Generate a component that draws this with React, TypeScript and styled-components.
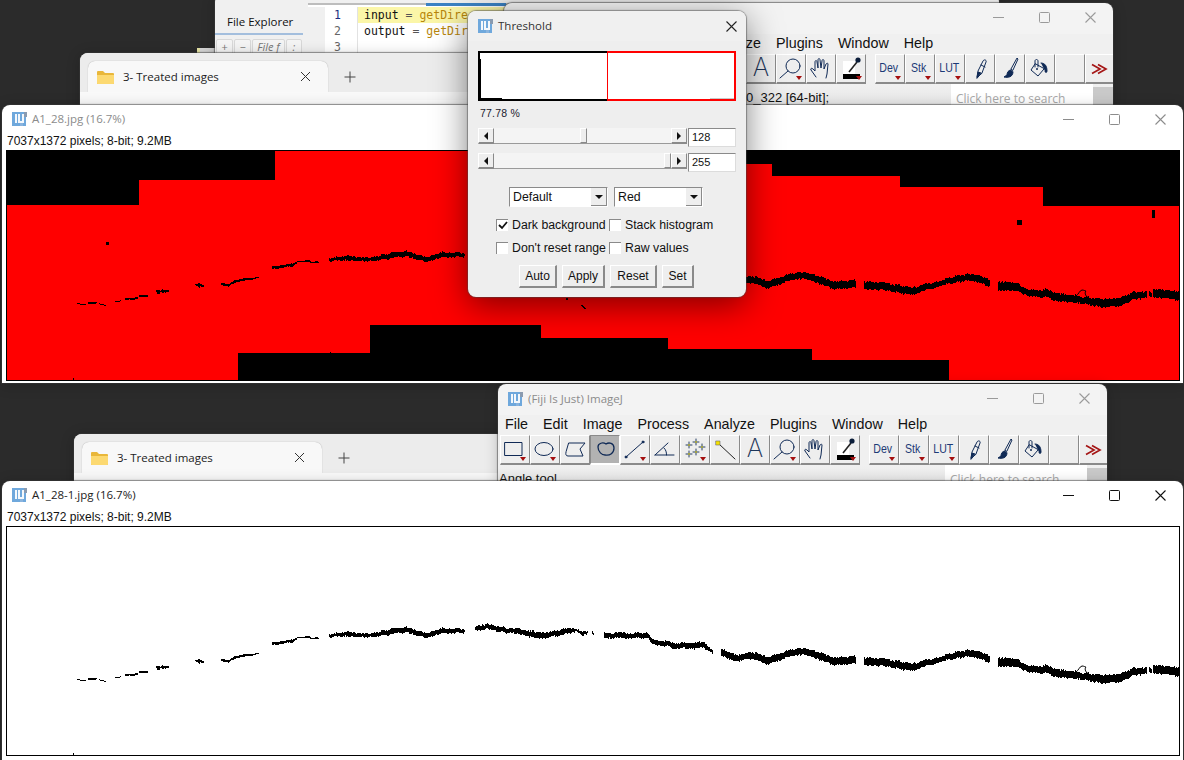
import React from "react";
import styled, { createGlobalStyle, css } from "styled-components";

const Global = createGlobalStyle`
  html, body { margin: 0; padding: 0; background: #2b2b2b; }
  #root { width: 1184px; height: 760px; }
  * { box-sizing: border-box; }
`;

const UI = `"Open Sans", "Noto Sans", "Liberation Sans", sans-serif`;
const AWT = `"Liberation Sans", Arial, sans-serif`;
const NAVY = "#102a56";

const Desktop = styled.div`
  position: relative;
  width: 1184px;
  height: 760px;
  overflow: hidden;
  background: #2b2b2b;
`;

const Win = styled.div<{ $x: number; $y: number; $w: number; $h: number; $bg?: string }>`
  position: absolute;
  left: ${(p) => p.$x}px;
  top: ${(p) => p.$y}px;
  width: ${(p) => p.$w}px;
  height: ${(p) => p.$h}px;
  background: ${(p) => p.$bg || "#f3f3f3"};
  border-radius: 8px 8px 0 0;
  box-shadow: 0 0 1px 1px rgba(60, 60, 60, 0.55), 0 2px 14px rgba(0, 0, 0, 0.22);
  overflow: hidden;
  display: flex;
  flex-direction: column;
`;

/* ---------- editor ---------- */
const EditorBody = styled.div`
  flex: 1;
  display: flex;
  padding-top: 9px;
`;
const Side = styled.div`
  width: 88px;
  display: flex;
  flex-direction: column;
`;
const SideTab = styled.div`
  height: 32px;
  padding: 7px 0 0 12px;
  border-bottom: 2px solid #a3bedd;
  font: 11.5px/24px ${UI};
  color: #111;
`;
const SideTools = styled.div`
  display: flex;
  gap: 1px;
  padding: 4px 0 0 1px;
`;
const SideBtn = styled.div<{ $w: number }>`
  width: ${(p) => p.$w}px;
  height: 16px;
  background: #f4f4f4;
  border: 1px solid #d8d8d8;
  border-radius: 2px;
  font: italic 11px/14px ${UI};
  color: #777;
  text-align: center;
`;
const Code = styled.div`
  margin-left: 5px;
  flex: 1;
  border-top: 2px solid #bdbdbd;
  background: #fff;
  display: flex;
  flex-direction: column;
  position: relative;
`;
const CodeTabMark = styled.div`
  position: absolute;
  left: 118px;
  top: -2px;
  width: 80px;
  height: 3px;
  background: #3b82c4;
`;
const CodeLine = styled.div`
  display: flex;
  height: 16px;
  font: 11.5px/16px "DejaVu Sans Mono", monospace;
  &:nth-child(2) { margin-top: 2px; }
  background: linear-gradient(90deg, #f0f0f0 0 17px, #fff 17px);
`;
const LineNo = styled.span<{ $on?: boolean }>`
  width: 50px;
  padding-right: 16px;
  text-align: right;
  color: ${(p) => (p.$on ? "#1c2e80" : "#666")};
  border-right: 1px solid #e2e2e2;
`;
const LineCode = styled.span<{ $hl?: boolean }>`
  flex: 1;
  padding-left: 6px;
  white-space: pre;
  color: #111;
  background: ${(p) => (p.$hl ? "#fbf6a8" : "transparent")};
`;
const Fn = styled.span`
  color: #b8860b;
`;
const Op = styled.span`
  color: #555;
`;
const Scrap = styled.div`
  position: absolute;
  left: 197px;
  top: 48px;
  width: 18px;
  height: 8px;
  background: linear-gradient(90deg, #e8e6a8 0 3px, #d9d9d9 3px);
`;

/* ---------- explorer ---------- */
const TabStrip = styled.div`
  display: flex;
  align-items: flex-end;
  height: 39px;
  padding-left: 8px;
  background: #ececec;
`;
const Tab = styled.div`
  width: 240px;
  height: 31px;
  background: #f8f8f8;
  border-radius: 7px 7px 0 0;
  display: flex;
  align-items: center;
  padding-left: 9px;
  box-shadow: 0 0 1px rgba(0, 0, 0, 0.35);
`;
const TabTitle = styled.span`
  flex: 1;
  margin-left: 9px;
  font: 500 11.5px/16px ${UI};
  color: #222;
  white-space: nowrap;
`;
const TabClose = styled.svg`
  width: 11px;
  height: 11px;
  margin-right: 17px;
`;
const TabPlus = styled.svg`
  width: 12px;
  height: 12px;
  margin: 0 0 9px 16px;
`;
const ExplorerBar = styled.div`
  flex: 1;
  background: #f9f9f9;
  display: flex;
  justify-content: flex-end;
  padding-top: 8px;
`;
const ExplorerCrumb = styled.div`
  width: 300px;
  background: #fdfdfd;
  border-radius: 4px 0 0 0;
`;

/* ---------- imagej ---------- */
const TitleBar = styled.div<{ $h?: number }>`
  height: ${(p) => p.$h ?? 30}px;
  flex: none;
  display: flex;
  align-items: center;
  padding: 0 0 2px 10px;
`;
const TitleText = styled.span<{ $active?: boolean }>`
  margin-left: 5px;
  font: 11.5px/16px ${UI};
  color: ${(p) => (p.$active ? "#222" : "#8b8b8b")};
  white-space: nowrap;
`;
const Controls = styled.div`
  margin-left: auto;
  display: flex;
  gap: 35px;
  padding-right: 17px;
`;
const Ctl = styled.svg`
  width: 11px;
  height: 11px;
  display: block;
`;
const MenuBar = styled.div`
  height: 20px;
  flex: none;
  display: flex;
  gap: 15px;
  padding-left: 7px;
  background: #f0f0f0;
  font: 14.3px/18px ${AWT};
  color: #111;
`;
const ToolBar = styled.div`
  height: 30px;
  flex: none;
  display: flex;
  padding-left: 2px;
  background: #f0f0f0;
`;
const Tool = styled.div<{ $active?: boolean; $gap?: boolean }>`
  position: relative;
  width: 30px;
  height: 30px;
  flex: none;
  display: flex;
  align-items: center;
  justify-content: center;
  background: ${(p) => (p.$active ? "#b2b2b2" : "#eeeeee")};
  border-top: 1px solid #fff;
  border-left: 1px solid #fff;
  border-right: 1px solid #8a8a8a;
  border-bottom: 2px solid #8a8a8a;
  ${(p) => p.$active && css`border-color: #8a8a8a #fff #fff #8a8a8a;`}
  ${(p) => p.$gap && css`margin-left: 9px;`}
  font-family: ${AWT};
  color: ${NAVY};
  svg { display: block; }
`;
const Drop = styled.span`
  position: absolute;
  right: 3px;
  bottom: 2px;
  width: 0;
  height: 0;
  border-left: 3.5px solid transparent;
  border-right: 3.5px solid transparent;
  border-top: 4px solid #a40f0f;
`;
const ToolLabel = styled.span<{ $size: number }>`
  font-size: ${(p) => p.$size}px;
  line-height: 1;
  transform: translate(-1px, -1px) scaleX(0.88);
  color: #1c3a76;
`;
const BigA = styled.span`
  font: 200 25px/1 Inter, ${AWT};
  color: #1d3558;
  transform: translateY(-1px);
`;
const StatusRow = styled.div`
  flex: 1;
  display: flex;
  background: linear-gradient(180deg, #f0f0f0 0%, #e6e6e6 100%);
`;
const StatusText = styled.div<{ $pad: number }>`
  width: 447px;
  flex: none;
  padding: 6px 0 0 ${(p) => p.$pad}px;
  font: 13px/16px ${AWT};
  color: #111;
  white-space: nowrap;
`;
const Search = styled.div`
  width: 142px;
  flex: none;
  background: #fff;
  padding: 7px 0 0 5px;
  font: 12px/16px ${UI};
  color: #a8a8a8;
  white-space: nowrap;
`;
const ScrollStub = styled.div`
  flex: 1;
  margin-top: 3px;
  background: #c9c9c9;
`;

/* ---------- image windows ---------- */
const Caption = styled.div`
  height: 15px;
  flex: none;
  padding-left: 5px;
  background: #fff;
  font: 12px/13px ${AWT};
  color: #111;
`;
const ImageHold = styled.div`
  flex: 1;
  background: #fff;
  padding: 0 3px 0 4px;
`;
const Frame = styled.div<{ $h: number }>`
  width: 1174px;
  height: ${(p) => p.$h}px;
  border: 1px solid #000;
  background: #fff;
  overflow: hidden;
  svg { display: block; }
`;

/* ---------- threshold dialog ---------- */
const Dialog = styled.div`
  position: absolute;
  left: 468px;
  top: 11px;
  width: 278px;
  height: 286px;
  background: #eeeeee;
  border-radius: 8px;
  box-shadow: 0 0 1px 1px rgba(70, 70, 70, 0.5), 0 8px 34px rgba(0, 0, 0, 0.5);
  display: flex;
  flex-direction: column;
  overflow: hidden;
  font-family: ${AWT};
`;
const DialogTitle = styled.div`
  height: 30px;
  flex: none;
  display: flex;
  align-items: center;
  padding: 0 9px 0 10px;
  background: #f0f0f0;
`;
const DialogTitleText = styled.span`
  margin-left: 5px;
  flex: 1;
  font: 11.5px/16px ${UI};
  color: #333;
`;
const DialogBody = styled.div`
  flex: 1;
  display: flex;
  flex-direction: column;
  padding: 10px 10px 0;
`;
const Plot = styled.div`
  width: 258px;
  height: 50px;
  flex: none;
  display: flex;
  background: #fff;
  position: relative;
`;
const PlotLow = styled.div`
  width: 129px;
  border: 2px solid #000;
  border-right: none;
  position: relative;
`;
const PlotHigh = styled.div`
  flex: 1;
  border: 2px solid #f00;
  border-left-width: 1px;
  position: relative;
`;
const PlotSpike = styled.span`
  position: absolute;
  left: 0;
  top: 6px;
  bottom: 0;
  width: 1px;
  background: #000;
`;
const PlotFoot = styled.span`
  position: absolute;
  left: 0;
  bottom: 0;
  width: 22px;
  height: 1px;
  background: #000;
`;
const PlotTail = styled.span`
  position: absolute;
  right: 0;
  bottom: 0;
  width: 24px;
  height: 1px;
  background: #c8c8c8;
`;
const Percent = styled.div`
  height: 27px;
  flex: none;
  padding: 5px 0 0 2px;
  font: 10.5px/14px ${AWT};
  color: #1a1a2e;
  letter-spacing: 0.2px;
`;
const SliderRow = styled.div`
  height: 19px;
  flex: none;
  display: flex;
  margin-bottom: 6px;
`;
const ArrowBtn = styled.div`
  width: 16px;
  height: 16px;
  flex: none;
  display: flex;
  align-items: center;
  justify-content: center;
  background: #eeeeee;
  border-top: 1px solid #fff;
  border-left: 1px solid #fff;
  border-right: 1px solid #8a8a8a;
  border-bottom: 2px solid #8a8a8a;
`;
const Track = styled.div`
  flex: none;
  width: 177px;
  height: 16px;
  background: #f4f4f4;
  border-bottom: 1px solid #9a9a9a;
  position: relative;
`;
const Thumb = styled.span<{ $at: number }>`
  position: absolute;
  left: ${(p) => p.$at}px;
  top: 0;
  width: 7px;
  height: 15px;
  background: #eeeeee;
  border-top: 1px solid #fff;
  border-left: 1px solid #fff;
  border-right: 1px solid #8a8a8a;
  border-bottom: 1px solid #8a8a8a;
`;
const Field = styled.div`
  width: 48px;
  height: 19px;
  margin-left: 1px;
  flex: none;
  background: #fff;
  border-top: 1px solid #8a8a8a;
  border-left: 1px solid #8a8a8a;
  border-right: 1px solid #dcdcdc;
  border-bottom: 1px solid #dcdcdc;
  padding-left: 3px;
  font: 11px/17px ${AWT};
  color: #111;
`;
const SelectRow = styled.div`
  display: flex;
  gap: 6px;
  padding: 9px 0 0 31px;
  flex: none;
`;
const Select = styled.div<{ $w: number }>`
  width: ${(p) => p.$w}px;
  height: 20px;
  display: flex;
  background: #fff;
  border-top: 1px solid #8a8a8a;
  border-left: 1px solid #8a8a8a;
  border-right: 1px solid #fff;
  border-bottom: 1px solid #fff;
`;
const SelectText = styled.span`
  flex: 1;
  padding-left: 3px;
  font: 12.3px/18px ${AWT};
  color: #111;
`;
const SelectBtn = styled.span`
  width: 16px;
  display: flex;
  align-items: center;
  justify-content: center;
  background: #eeeeee;
  border-right: 1px solid #8a8a8a;
  border-bottom: 1px solid #8a8a8a;
`;
const Checks = styled.div`
  display: grid;
  grid-template-columns: 113px auto;
  grid-auto-rows: 22.5px;
  padding: 7px 0 0 18px;
  flex: none;
`;
const Check = styled.label`
  display: flex;
  align-items: center;
  gap: 4px;
  font: 12.3px/16px ${AWT};
  color: #111;
  white-space: nowrap;
`;
const Box = styled.span`
  width: 12px;
  height: 12px;
  flex: none;
  background: #fff;
  border-top: 1px solid #8a8a8a;
  border-left: 1px solid #8a8a8a;
  display: flex;
  align-items: center;
  justify-content: center;
`;
const Buttons = styled.div`
  display: flex;
  gap: 5px;
  padding: 6px 0 0 41px;
  flex: none;
`;
const Btn = styled.div<{ $w: number }>`
  width: ${(p) => p.$w}px;
  height: 23px;
  text-align: center;
  background: #eeeeee;
  border-top: 1px solid #fff;
  border-left: 1px solid #fff;
  border-right: 2px solid #8a8a8a;
  border-bottom: 2px solid #8a8a8a;
  font: 12px/20px ${AWT};
  color: #111;
`;

/* ---------- drawings ---------- */
const FijiIcon = () => (
  <svg width="15" height="14" viewBox="0 0 15 14">
    <rect x="0" y="0" width="14" height="14" fill="#6fa8dc" />
    <rect x="3" y="2" width="2" height="9" fill="#f4f8fc" />
    <path d="M6 2h2v7h2V2h3v2h-1v7H6z" fill="#f4f8fc" />
    <rect x="12" y="0" width="3" height="5" fill="#8a9bb0" />
    <rect x="8" y="11" width="3" height="3" fill="#8ab4de" />
  </svg>
);

const Folder = () => (
  <svg width="17" height="14" viewBox="0 0 17 14">
    <path d="M0 2a1 1 0 0 1 1-1h5l2 2h8a1 1 0 0 1 1 1v9a1 1 0 0 1-1 1H1a1 1 0 0 1-1-1z" fill="#e9b73a" />
    <path d="M0 5h17v8a1 1 0 0 1-1 1H1a1 1 0 0 1-1-1z" fill="#fcd971" />
  </svg>
);

const XIcon = ({ c }: { c: string }) => (
  <Ctl viewBox="0 0 11 11"><path d="M.5.5l10 10M10.5.5l-10 10" stroke={c} fill="none" strokeWidth="1.1" /></Ctl>
);

const WinControls = ({ c }: { c: string }) => (
  <Controls>
    <Ctl viewBox="0 0 11 11"><path d="M0 5.500h11" stroke={c} strokeWidth="1.1" /></Ctl>
    <Ctl viewBox="0 0 11 11"><rect x=".5" y=".5" width="10" height="10" rx="1" fill="none" stroke={c} /></Ctl>
    <XIcon c={c} />
  </Controls>
);

const Ico = ({ children }: { children: React.ReactNode }) => (
  <svg width="28" height="27" viewBox="0 0 28 27" fill="none" stroke={NAVY} strokeWidth="1" strokeLinecap="round" strokeLinejoin="round">
    {children}
  </svg>
);

const Spark = ({ x, y }: { x: number; y: number }) => (
  <g>
    <path d={`M${x - 3} ${y}h6M${x} ${y - 3}v6`} stroke={NAVY} strokeWidth="0.9" />
    <rect x={x - 0.7} y={y - 0.7} width="1.4" height="1.4" fill="#f4e000" stroke="none" />
  </g>
);

const ToolRow = () => (
  <ToolBar>
    <Tool><Ico><rect x="4" y="6.5" width="17" height="13" /></Ico><Drop /></Tool>
    <Tool><Ico><ellipse cx="13" cy="13" rx="9" ry="6.5" /></Ico><Drop /></Tool>
    <Tool><Ico><path d="M8 7h16l-5 6 3 7H7Q4 20 5 16z" /></Ico></Tool>
    <Tool $active><Ico><path d="M7 11c0-4 5-5 8-3 3-2 8-1 8 4s-4 8-9 7c-3 0-7-3-7-8z" strokeWidth="1.3" /><path d="M11 15c2 1 4 1 6 0" stroke="#b2b2b2" /></Ico></Tool>
    <Tool><Ico><path d="M5 21L22 6" /><circle cx="5" cy="21" r="1" fill={NAVY} /><circle cx="22" cy="6" r="1" fill={NAVY} /></Ico><Drop /></Tool>
    <Tool><Ico><path d="M4 19L17 7M4 19h19M13 12c2 2 2.500 4 2.500 7" /></Ico></Tool>
    <Tool>
      <Ico>
        <Spark x={8} y={9} /><Spark x={15} y={6} /><Spark x={21} y={11} /><Spark x={8} y={18} /><Spark x={15} y={16} />
      </Ico>
      <Drop />
    </Tool>
    <Tool>
      <Ico>
        <path d="M8 8l16 15" stroke="#222" />
        <rect x="5" y="5" width="4" height="4" fill="#f4e000" stroke="#666" strokeWidth=".6" />
      </Ico>
    </Tool>
    <Tool><BigA>A</BigA></Tool>
    <Tool><Ico><circle cx="16" cy="11" r="7" /><path d="M11 16l-8 7" /></Ico><Drop /></Tool>
    <Tool>
      <Ico>
        <path d="M9 22l-5-7c-1-2 1-2 2-1l2 2 0-9c0-2 2-2 2 0l1 6 0-8c0-2 2-2 2 0l1 8 1-7c0-2 2-2 2 0l0 8 2-5c1-1 2-1 2 0l-1 10-1 4" />
      </Ico>
    </Tool>
    <Tool>
      <svg width="28" height="27" viewBox="0 0 28 27">
        <rect x="6" y="6" width="12" height="13" fill="#fff" />
        <rect x="6" y="19" width="17" height="5" fill="#000" />
        <path d="M12 17l8-10" stroke="#222" strokeWidth="1.6" />
        <circle cx="21" cy="5" r="2.600" fill="#0b1d3a" />
      </svg>
      <Drop />
    </Tool>
    <Tool $gap><ToolLabel $size={12}>Dev</ToolLabel><Drop /></Tool>
    <Tool><ToolLabel $size={12}>Stk</ToolLabel><Drop /></Tool>
    <Tool><ToolLabel $size={12}>LUT</ToolLabel><Drop /></Tool>
    <Tool>
      <Ico>
        <path d="M11 22l1-6 5-10c1-2 4-1 3 1l-4 11z" />
        <path d="M11 23l1-6 3 1z" fill={NAVY} />
        <path d="M15 10l4 2" />
      </Ico>
    </Tool>
    <Tool>
      <Ico>
        <path d="M15 14l6-11 1 1-5 11z" />
        <path d="M15 15c-3 0-4 3-4 5l-3 2c4 1 9 0 9-5z" fill={NAVY} />
      </Ico>
    </Tool>
    <Tool>
      <Ico>
        <path d="M9 9l-4 6 7 6 6-7z" />
        <path d="M9 12V6c0-2 3-2 3 0v6" />
        <path d="M15 8c4 0 6 3 6 8 0 2-2 2-2 0" fill={NAVY} />
        <circle cx="11" cy="14" r="1" fill={NAVY} stroke="none" />
      </Ico>
    </Tool>
    <Tool />
    <Tool>
      <svg width="22" height="12" viewBox="0 0 22 12" fill="none" stroke="#a51616" strokeWidth="1.7">
        <path d="M3 1.500L11 6 3 10.500M9 1.500L17 6l-8 4.500" />
      </svg>
    </Tool>
  </ToolBar>
);

type P = [number, number, number];
const SEGS: P[][] = [
  [[77, 304, 1], [86, 304.3, 1]],
  [[88, 303, 1.6], [97, 303, 1.6]],
  [[99, 304, 1], [106, 305, 1]],
  [[115, 302, 1], [121, 300.5, 1]],
  [[125, 299, 2], [138, 298.5, 2]],
  [[139, 297, 2], [148, 295.5, 2]],
  [[156, 291, 2.5], [163, 292, 3], [169, 290.5, 1.5]],
  [[195, 284, 1.5], [199, 285, 4], [204, 286.5, 1.5]],
  [[221, 283.5, 2.5], [228, 285, 2.5], [236, 281, 2.5], [248, 279.5, 2], [259, 278, 1]],
  [[272, 267.5, 2.5], [286, 266, 2.5], [292, 265, 3], [297, 263, 1]],
  [[297, 262, 1], [308, 261.5, 1.4], [319, 263, 1.5]],
  [[329, 259.5, 3], [347, 258, 4.5], [367, 260, 3.5], [387, 256.5, 5], [405, 253.5, 5], [425, 260, 5], [443, 254.5, 5], [465, 255, 3.5]],
  [[475, 252, 4.5], [486, 250.5, 5], [498, 253, 5], [513, 255, 5], [541, 259.5, 6], [570, 255, 5], [576, 254, 2], [582, 258, 4], [588, 255, 2]],
  [[592, 257, 3], [594, 259, 2]],
  [[604, 259, 5], [628, 260, 5], [647, 259, 5], [651, 265, 5], [677, 270, 5.5], [704, 269, 6], [713, 276, 2.5]],
  [[721, 277, 7], [738, 282, 6.5], [751, 279, 6.5], [766, 285, 7.5], [787, 278, 6.5], [803, 275, 6.5], [833, 285, 7.5], [856, 284, 7.5]],
  [[864, 285, 7.5], [887, 287, 7.5], [912, 291, 7.5], [927, 287, 6], [940, 283, 5], [957, 279, 6.5], [973, 277, 6.5], [990, 283, 7]],
  [[998, 286, 8.5], [1017, 287, 7.5], [1028, 293, 6.5], [1047, 293, 7.5], [1053, 297, 8.5], [1070, 298, 7], [1080, 300, 7], [1103, 303, 8.5], [1120, 302, 8.5], [1133, 296, 7], [1147, 294, 6]],
  [[1149, 294, 5], [1152, 295, 4]],
  [[1153, 293, 8.5], [1166, 294, 8.5], [1179, 296, 9]],
];

const noise = (n: number) => {
  const s = Math.sin(n * 12.9898) * 43758.5453;
  return s - Math.floor(s);
};

const crackPath = () => {
  let d = "";
  SEGS.forEach((pts) => {
    for (let i = 0; i < pts.length - 1; i++) {
      const [x0, y0, t0] = pts[i];
      const [x1, y1, t1] = pts[i + 1];
      for (let x = x0; x < x1; x++) {
        const f = (x - x0) / (x1 - x0);
        const y = y0 + (y1 - y0) * f + (noise(Math.floor(x / 5)) - 0.5) * 1.4;
        const t = t0 + (t1 - t0) * f;
        const rough = t > 2.5 ? 1.6 : 0.3;
        const top = Math.round(y - t / 2 + (noise(x) - 0.5) * rough);
        const bot = Math.max(top + 1, Math.round(y + t / 2 + (noise(x + 97) - 0.5) * rough));
        d += `M${x} ${top}h1V${bot}h-1z`;
      }
    }
  });
  return d;
};
const CRACK = crackPath();

const Crack = () => (
  <g>
    <path d={CRACK} fill="#000" shapeRendering="crispEdges" />
    <path d="M1076 296c3-2 3-5 6-6 2 0 3 1 4 1M1086 291c-2 2 0 6 3 7" fill="none" stroke="#000" strokeWidth="1" />
  </g>
);

const BLACK_AREAS = [
  "M6 150H275V180H139V205H6Z",
  "M746 150H1180V206H1043V187H900V176H772V164H746Z",
  "M238 381V353H370V325H541V338H668V349H812V360H949V381Z",
];

const ThresholdImage = () => (
  <svg width="1172" height="229" viewBox="7 151 1172 229">
    <rect x="6" y="150" width="1174" height="231" fill="#f00" />
    {BLACK_AREAS.map((d) => <path key={d} d={d} fill="#000" shapeRendering="crispEdges" />)}
    <Crack />
    <g fill="#000" shapeRendering="crispEdges">
      <rect x="106" y="242" width="3" height="3" />
      <rect x="1017" y="220" width="5" height="5" />
      <rect x="1152" y="210" width="3" height="8" />
      <rect x="566" y="298" width="2" height="2" />
      <path d="M581 305h2l3 4h-2z" />
      <rect x="73" y="378" width="1" height="2" />
      <rect x="330" y="352" width="1" height="2" />
    </g>
  </svg>
);

const MaskImage = () => (
  <svg width="1172" height="228" viewBox="7 151 1172 228">
    <rect x="6" y="150" width="1174" height="231" fill="#fff" />
    <Crack />
    <rect x="73" y="377" width="1" height="2" fill="#000" />
  </svg>
);

const ImageJWindow = ({ x, y, title, status, pad }: { x: number; y: number; title?: string; status: string; pad: number }) => (
  <Win $x={x} $y={y} $w={609} $h={102}>
    <TitleBar $h={31}>
      <FijiIcon />
      {title && <TitleText>{title}</TitleText>}
      <WinControls c="#9a9a9a" />
    </TitleBar>
    <MenuBar>
      {["File", "Edit", "Image", "Process", "Analyze", "Plugins", "Window", "Help"].map((m) => (
        <span key={m}>{m}</span>
      ))}
    </MenuBar>
    <ToolRow />
    <StatusRow>
      <StatusText $pad={pad}>{status}</StatusText>
      <Search>Click here to search</Search>
      <ScrollStub />
    </StatusRow>
  </Win>
);

const ExplorerWindow = ({ x, y, h }: { x: number; y: number; h: number }) => (
  <Win $x={x} $y={y} $w={430} $h={h} $bg="#ececec">
    <TabStrip>
      <Tab>
        <Folder />
        <TabTitle>3- Treated images</TabTitle>
        <TabClose viewBox="0 0 11 11"><path d="M1 1l9 9M10 1l-9 9" stroke="#333" fill="none" /></TabClose>
      </Tab>
      <TabPlus viewBox="0 0 12 12"><path d="M6 .5v11M.5 6h11" stroke="#444" fill="none" /></TabPlus>
    </TabStrip>
    <ExplorerBar><ExplorerCrumb /></ExplorerBar>
  </Win>
);

export default function App() {
  return (
    <Desktop>
      <Global />
      <Scrap />
      <Win $x={215} $y={-6} $w={784} $h={70} $bg="#f0f0f0">
        <EditorBody>
          <Side>
            <SideTab>File Explorer</SideTab>
            <SideTools>
              <SideBtn $w={17}>+</SideBtn>
              <SideBtn $w={17}>−</SideBtn>
              <SideBtn $w={33}>File f</SideBtn>
              <SideBtn $w={16}>:</SideBtn>
            </SideTools>
          </Side>
          <Code>
            <CodeTabMark />
            <CodeLine>
              <LineNo $on>1</LineNo>
              <LineCode $hl>input <Op>=</Op> <Fn>getDire</Fn></LineCode>
            </CodeLine>
            <CodeLine>
              <LineNo>2</LineNo>
              <LineCode>output <Op>=</Op> <Fn>getDir</Fn></LineCode>
            </CodeLine>
            <CodeLine>
              <LineNo>3</LineNo>
              <LineCode />
            </CodeLine>
          </Code>
        </EditorBody>
      </Win>

      <ExplorerWindow x={80} y={53} h={55} />
      <ImageJWindow x={504} y={3} status="0_322 [64-bit];" pad={242} />

      <Win $x={2} $y={105} $w={1181} $h={278} $bg="#fff">
        <TitleBar>
          <FijiIcon />
          <TitleText>A1_28.jpg (16.7%)</TitleText>
          <WinControls c="#8c8c8c" />
        </TitleBar>
        <Caption>7037x1372 pixels; 8-bit; 9.2MB</Caption>
        <ImageHold>
          <Frame $h={231}><ThresholdImage /></Frame>
        </ImageHold>
      </Win>

      <ExplorerWindow x={74} y={434} h={50} />
      <ImageJWindow x={498} y={384} title="(Fiji Is Just) ImageJ" status="Angle tool" pad={1} />

      <Win $x={2} $y={481} $w={1181} $h={285} $bg="#fff">
        <TitleBar>
          <FijiIcon />
          <TitleText $active>A1_28-1.jpg (16.7%)</TitleText>
          <WinControls c="#111" />
        </TitleBar>
        <Caption>7037x1372 pixels; 8-bit; 9.2MB</Caption>
        <ImageHold>
          <Frame $h={230}><MaskImage /></Frame>
        </ImageHold>
      </Win>

      <Dialog>
        <DialogTitle>
          <FijiIcon />
          <DialogTitleText>Threshold</DialogTitleText>
          <XIcon c="#222" />
        </DialogTitle>
        <DialogBody>
          <Plot>
            <PlotLow><PlotSpike /><PlotFoot /></PlotLow>
            <PlotHigh><PlotTail /></PlotHigh>
          </Plot>
          <Percent>77.78 %</Percent>
          <SliderRow>
            <ArrowBtn><svg width="6" height="8"><path d="M5 0v8L1 4z" fill="#111" /></svg></ArrowBtn>
            <Track><Thumb $at={86} /></Track>
            <ArrowBtn><svg width="6" height="8"><path d="M1 0v8l4-4z" fill="#111" /></svg></ArrowBtn>
            <Field>128</Field>
          </SliderRow>
          <SliderRow>
            <ArrowBtn><svg width="6" height="8"><path d="M5 0v8L1 4z" fill="#111" /></svg></ArrowBtn>
            <Track><Thumb $at={170} /></Track>
            <ArrowBtn><svg width="6" height="8"><path d="M1 0v8l4-4z" fill="#111" /></svg></ArrowBtn>
            <Field>255</Field>
          </SliderRow>
          <SelectRow>
            <Select $w={99}>
              <SelectText>Default</SelectText>
              <SelectBtn><svg width="8" height="4"><path d="M0 0h8L4 4z" fill="#111" /></svg></SelectBtn>
            </Select>
            <Select $w={89}>
              <SelectText>Red</SelectText>
              <SelectBtn><svg width="8" height="4"><path d="M0 0h8L4 4z" fill="#111" /></svg></SelectBtn>
            </Select>
          </SelectRow>
          <Checks>
            <Check>
              <Box><svg width="10" height="9" viewBox="0 0 10 9"><path d="M1 4l3 3 5-6" fill="none" stroke="#111" strokeWidth="1.8" /></svg></Box>
              Dark background
            </Check>
            <Check><Box />Stack histogram</Check>
            <Check><Box />Don't reset range</Check>
            <Check><Box />Raw values</Check>
          </Checks>
          <Buttons>
            <Btn $w={38}>Auto</Btn>
            <Btn $w={43}>Apply</Btn>
            <Btn $w={47}>Reset</Btn>
            <Btn $w={32}>Set</Btn>
          </Buttons>
        </DialogBody>
      </Dialog>
    </Desktop>
  );
}
